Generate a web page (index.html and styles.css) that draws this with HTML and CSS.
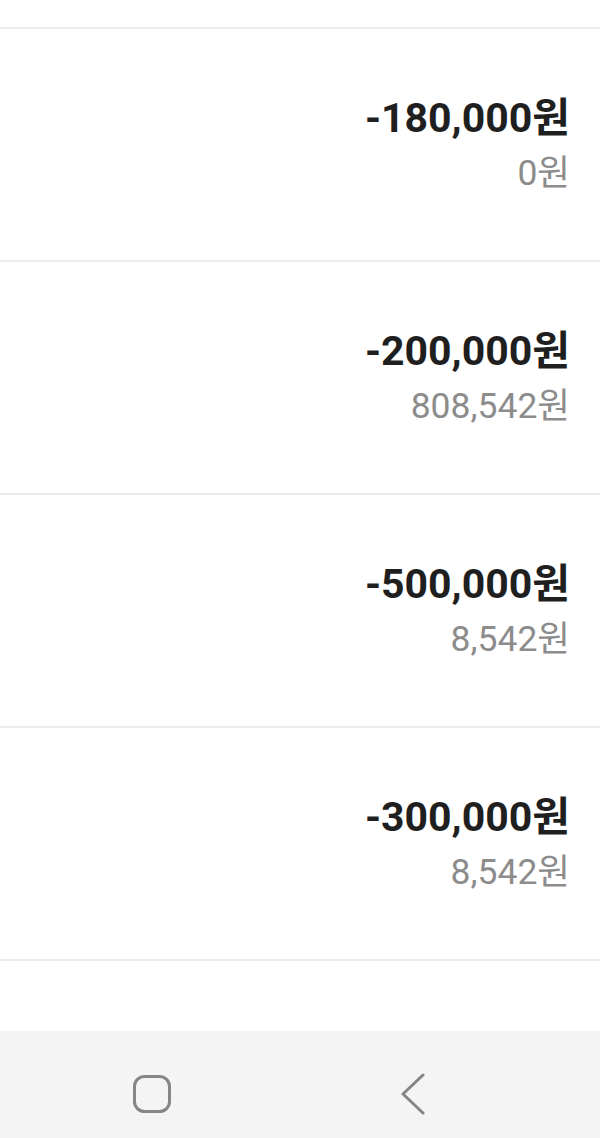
FILE: index.html
```html
<!DOCTYPE html>
<html lang="ko">
<head>
<meta charset="utf-8">
<link rel="stylesheet" href="styles.css">
</head>
<body>
<div class="screen">
  <div class="list">
    <div class="top-gap"></div>
    <div class="row">
      <div class="amount">-180,000원</div>
      <div class="balance">0원</div>
    </div>
    <div class="row">
      <div class="amount">-200,000원</div>
      <div class="balance">808,542원</div>
    </div>
    <div class="row">
      <div class="amount">-500,000원</div>
      <div class="balance">8,542원</div>
    </div>
    <div class="row">
      <div class="amount">-300,000원</div>
      <div class="balance">8,542원</div>
    </div>
    <div class="row last"></div>
  </div>
  <nav class="navbar">
    <svg class="nav-home" width="40" height="40" viewBox="0 0 40 40">
      <rect x="2.5" y="2.5" width="35" height="35" rx="10" ry="10" fill="none" stroke="#858585" stroke-width="3"/>
    </svg>
    <svg class="nav-back" width="26" height="42" viewBox="0 0 26 42">
      <polyline points="23,2 3,21 23,40" fill="none" stroke="#858585" stroke-width="3" stroke-linecap="round" stroke-linejoin="round"/>
    </svg>
  </nav>
</div>
</body>
</html>
```

FILE: styles.css
```css
html, body {
  margin: 0;
  padding: 0;
  background: #ffffff;
}

.screen {
  width: 600px;
  height: 1138px;
  display: flex;
  flex-direction: column;
  overflow: hidden;
  font-family: "Roboto", "Noto Sans CJK KR", sans-serif;
}

.list {
  flex: 1;
  display: flex;
  flex-direction: column;
  overflow: hidden;
}

.top-gap {
  height: 27px;
  flex: none;
}

.row {
  flex: none;
  border-top: 2px solid #ececec;
  display: flex;
  flex-direction: column;
  align-items: flex-end;
  padding: 65px 30px 0 0;
  box-sizing: border-box;
  height: 233px;
}

.row.last {
  height: 80px;
}

.amount {
  font-size: 41px;
  line-height: 48px;
  height: 48px;
  font-weight: 700;
  color: #1f1f1f;
  white-space: nowrap;
}

.balance {
  margin-top: 10px;
  font-size: 35.5px;
  line-height: 42px;
  height: 42px;
  font-weight: 400;
  color: #8c8c8c;
  white-space: nowrap;
}

.navbar {
  flex: none;
  height: 107px;
  background: #f4f4f4;
  display: flex;
  align-items: flex-start;
  padding: 43px 0 0 132px;
  box-sizing: border-box;
}

.nav-home {
  display: block;
}

.nav-back {
  display: block;
  margin-left: 228px;
  margin-top: -1px;
}
```
